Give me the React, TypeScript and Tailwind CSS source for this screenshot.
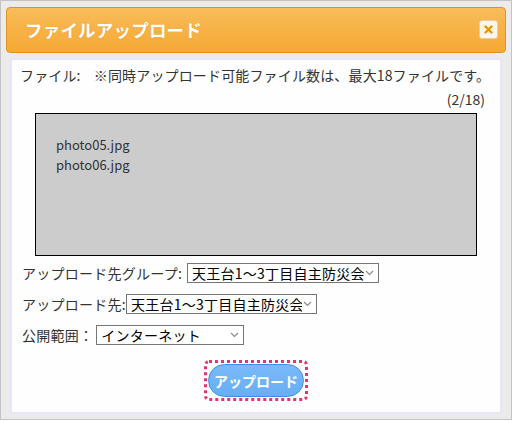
import React from "react";

const font = { fontFamily: '"Noto Sans CJK JP", "Noto Sans", sans-serif' };

function FakeSelect({ width, value }: { width: number; value: string }) {
  return (
    <div className="relative shrink-0" style={{ width }}>
      <select
        className="block w-full h-[20px] appearance-none border border-[#767676] bg-white text-[14px] leading-[18px] text-black pl-[4px] pr-[14px] rounded-none outline-none"
        style={font}
        defaultValue={value}
      >
        <option>{value}</option>
      </select>
      <svg
        className="pointer-events-none absolute right-[5px] top-[7px]"
        width="9"
        height="6"
        viewBox="0 0 9 6"
        fill="none"
      >
        <path d="M1 1l3.5 3.5L8 1" stroke="#8a8a8a" strokeWidth="1.2" />
      </svg>
    </div>
  );
}

export default function App() {
  return (
    <div
      className="w-[512px] h-[420px] bg-[#ebebeb] border border-[#c4c4c4] pt-[6px] px-[5px] pb-[5px] flex flex-col text-[#333]"
      style={font}
    >
      <div className="h-[46px] shrink-0 rounded-[4px] border border-[#e2931c] bg-gradient-to-b from-[#f8bd5a] via-[#f7b246] to-[#f5a833] flex items-center justify-between pl-[18px] pr-[7px]">
        <span className="text-white font-bold text-[17.5px] leading-none tracking-[0.2px] [text-shadow:0_0_1px_rgba(180,100,0,0.3)]">
          ファイルアップロード
        </span>
        <button className="w-[19px] h-[19px] rounded-[3px] bg-[#fbf5ee] border border-[#eacba4] flex items-center justify-center mt-[-2px]">
          <svg width="9" height="9" viewBox="0 0 9 9">
            <path d="M1.5 1.5l6 6M7.5 1.5l-6 6" stroke="#f08c05" strokeWidth="2.2" strokeLinecap="round" />
          </svg>
        </button>
      </div>

      <div className="mt-[5px] mx-[4px] flex-1 border-2 border-[#e6e6fb] bg-[#fefefe] flex flex-col">
        <div className="mt-[5px] pl-[8px] text-[14px] leading-[20px] whitespace-pre tracking-[0.15px]">
          {"ファイル:    ※同時アップロード可能ファイル数は、最大18ファイルです。"}
        </div>
        <div className="mt-[4px] pr-[15px] text-right text-[14px] leading-[20px]">(2/18)</div>

        <div className="mt-[4px] ml-[23px] w-[442px] h-[143px] border border-black bg-[#cccccc] pl-[20px] pt-[21px] text-[13px] leading-[20px] text-[#333]">
          <div>photo05.jpg</div>
          <div>photo06.jpg</div>
        </div>

        <div className="mt-[7px] ml-[10px] flex items-center text-[14px] leading-[20px] tracking-[0.25px]">
          <span className="mr-[5px]">アップロード先グループ:</span>
          <FakeSelect width={192} value="天王台1～3丁目自主防災会" />
        </div>
        <div className="mt-[11px] ml-[10px] flex items-center text-[14px] leading-[20px] tracking-[0.25px]">
          <span className="mr-[0px]">アップロード先:</span>
          <FakeSelect width={191} value="天王台1～3丁目自主防災会" />
        </div>
        <div className="mt-[11px] ml-[10px] flex items-center text-[14px] leading-[20px] tracking-[0.25px]">
          <span className="mr-[3px]">公開範囲：</span>
          <FakeSelect width={148} value="インターネット" />
        </div>

        <div className="mt-[15px] flex justify-center">
          <div className="border-[3px] border-dotted border-[#e5336d] rounded-[5px] p-[1px]">
            <button className="w-[96px] h-[33px] rounded-full bg-gradient-to-b from-[#78baf9] to-[#68aef6] border border-[#3c8fe4] text-white font-bold text-[14px] leading-none">
              アップロード
            </button>
          </div>
        </div>
      </div>
    </div>
  );
}
